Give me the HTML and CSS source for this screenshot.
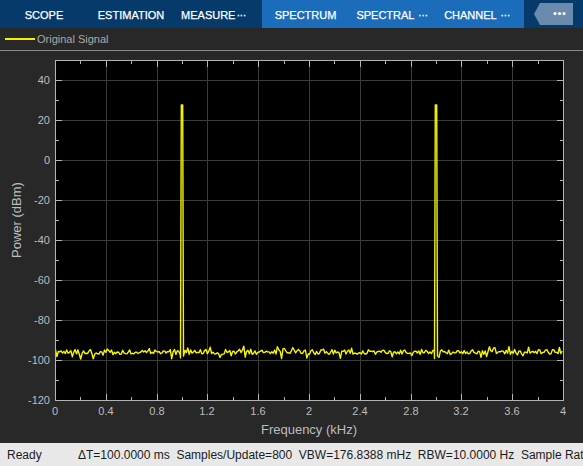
FILE: index.html
```html
<!DOCTYPE html>
<html lang="en">
<head>
<meta charset="utf-8">
<title>Spectrum Analyzer</title>
<link rel="stylesheet" href="styles.css">
</head>
<body>
<div class="app">
  <nav class="toolbar">
    <div class="group group-dark">
      <div class="tab"><span>SCOPE</span></div>
      <div class="tab"><span>ESTIMATION</span></div>
      <div class="tab"><span>MEASURE<span class="ell">···</span></span></div>
    </div>
    <div class="group group-light">
      <div class="tab"><span>SPECTRUM</span></div>
      <div class="tab"><span>SPECTRAL <span class="ell">···</span></span></div>
      <div class="tab"><span>CHANNEL <span class="ell">···</span></span></div>
    </div>
    <div class="group-end">
      <div class="more">
        <svg width="39" height="22" viewBox="0 0 39 22"><circle cx="21" cy="10.5" r="1.6" fill="#fff"/><circle cx="25.5" cy="10.5" r="1.6" fill="#fff"/><circle cx="30" cy="10.5" r="1.6" fill="#fff"/></svg>
      </div>
    </div>
  </nav>

  <div class="legend">
    <span class="swatch"></span>
    <span class="legend-label">Original Signal</span>
  </div>

  <div class="plot">
    <svg class="chart" width="583" height="392" viewBox="0 51 583 392">
      <rect x="55" y="60" width="509" height="341" fill="#000"/>
      <path class="grid" d="M106.5 61V400M157.5 61V400M207.5 61V400M258.5 61V400M309.5 61V400M360.5 61V400M411.5 61V400M461.5 61V400M512.5 61V400M56 80.5H563M56 120.5H563M56 160.5H563M56 200.5H563M56 240.5H563M56 280.5H563M56 320.5H563M56 360.5H563"/>
      <polyline id="trace" class="trace" points=""/>
      <path class="ticks" d="M56 80.5h6M56 120.5h6M56 160.5h6M56 200.5h6M56 240.5h6M56 280.5h6M56 320.5h6M56 360.5h6M56 100.5h3M56 140.5h3M56 180.5h3M56 220.5h3M56 260.5h3M56 300.5h3M56 340.5h3M56 380.5h3M563 80.5h-6M563 120.5h-6M563 160.5h-6M563 200.5h-6M563 240.5h-6M563 280.5h-6M563 320.5h-6M563 360.5h-6M563 100.5h-3M563 140.5h-3M563 180.5h-3M563 220.5h-3M563 260.5h-3M563 300.5h-3M563 340.5h-3M563 380.5h-3M106.5 400v-6M157.5 400v-6M207.5 400v-6M258.5 400v-6M309.5 400v-6M360.5 400v-6M411.5 400v-6M461.5 400v-6M512.5 400v-6M80.5 400v-3M131.5 400v-3M182.5 400v-3M233.5 400v-3M284.5 400v-3M334.5 400v-3M385.5 400v-3M436.5 400v-3M487.5 400v-3M538.5 400v-3M106.5 61v6M157.5 61v6M207.5 61v6M258.5 61v6M309.5 61v6M360.5 61v6M411.5 61v6M461.5 61v6M512.5 61v6M80.5 61v3M131.5 61v3M182.5 61v3M233.5 61v3M284.5 61v3M334.5 61v3M385.5 61v3M436.5 61v3M487.5 61v3M538.5 61v3"/>
      <rect class="frame" x="55.5" y="60.5" width="508" height="340"/>
      <g class="ylabels">
        <text x="50" y="84">40</text>
        <text x="50" y="124">20</text>
        <text x="50" y="164">0</text>
        <text x="50" y="204">-20</text>
        <text x="50" y="244">-40</text>
        <text x="50" y="284">-60</text>
        <text x="50" y="324">-80</text>
        <text x="50" y="364">-100</text>
        <text x="50" y="404">-120</text>
      </g>
      <g class="xlabels">
        <text x="55" y="415">0</text>
        <text x="106" y="415">0.4</text>
        <text x="157" y="415">0.8</text>
        <text x="207" y="415">1.2</text>
        <text x="258" y="415">1.6</text>
        <text x="309" y="415">2</text>
        <text x="360" y="415">2.4</text>
        <text x="411" y="415">2.8</text>
        <text x="461" y="415">3.2</text>
        <text x="512" y="415">3.6</text>
        <text x="563" y="415">4</text>
      </g>
      <text class="axis-title" x="309" y="434" text-anchor="middle">Frequency (kHz)</text>
      <text class="axis-title" x="21" y="220" text-anchor="middle" transform="rotate(-90 21 220)">Power (dBm)</text>
    </svg>
  </div>

  <footer class="status">
    <span class="ready">Ready</span>
    <span class="info">ΔT=100.0000 ms  Samples/Update=800  VBW=176.8388 mHz  RBW=10.0000 Hz  Sample Rate=8.0000 kHz</span>
  </footer>
</div>
<script src="script.js"></script>
</body>
</html>
```

FILE: styles.css
```css
* { box-sizing: border-box; }
html, body { margin: 0; padding: 0; }
body {
  width: 583px;
  height: 466px;
  overflow: hidden;
  background: #282828;
  font-family: "Liberation Sans", Arial, sans-serif;
}
.app {
  display: flex;
  flex-direction: column;
  height: 466px;
}
.toolbar {
  display: flex;
  height: 28px;
  flex: none;
  background: #063a6b;
}
.group {
  display: grid;
  height: 28px;
}
.group-dark {
  width: 262px;
  grid-template-columns: 88px 86px 79px;
}
.group-light {
  width: 262px;
  background: #1b6dbb;
  grid-template-columns: 87px 86px 84px;
}
.group-end {
  flex: 1;
  display: flex;
  align-items: flex-start;
}
.tab {
  color: #ffffff;
  font-size: 11px;
  display: flex;
  align-items: center;
  justify-content: center;
  white-space: pre;
  padding-top: 1px;
  -webkit-text-stroke: 0.25px #ffffff;
}
.ell {
  letter-spacing: -0.5px;
  margin-left: 1px;
}
.more {
  margin: 3px 0 0 10px;
  width: 39px;
  height: 22px;
  background: #6a8bad;
  clip-path: polygon(0 50%, 6px 0, 100% 0, 100% 100%, 6px 100%);
}
.more svg { display: block; }
.legend {
  height: 23px;
  flex: none;
  display: flex;
  align-items: center;
  border-bottom: 1px solid #8a8a8a;
}
.swatch {
  display: block;
  margin-left: 5px;
  width: 30px;
  height: 1.5px;
  background: #f2f200;
}
.legend-label {
  margin-left: 2px;
  font-size: 11px;
  color: #a9a9a9;
}
.plot {
  height: 392px;
  flex: none;
}
.chart { display: block; }
.grid {
  stroke: #3b3b3b;
  stroke-width: 1;
  fill: none;
  shape-rendering: crispEdges;
}
.ticks {
  stroke: #b4b4b4;
  stroke-width: 1;
  fill: none;
  shape-rendering: crispEdges;
}
.frame {
  fill: none;
  stroke: #b4b4b4;
  stroke-width: 1;
  shape-rendering: crispEdges;
}
.trace {
  fill: none;
  stroke: #f5f500;
  stroke-width: 1.4;
  stroke-linejoin: round;
}
.ylabels text {
  font-size: 11px;
  fill: #bdbdbd;
  text-anchor: end;
}
.xlabels text {
  font-size: 11px;
  fill: #bdbdbd;
  text-anchor: middle;
}
.axis-title {
  font-size: 13px;
  fill: #bdbdbd;
}
.status {
  height: 23px;
  flex: none;
  display: flex;
  align-items: center;
  background: #e8e8e8;
  color: #1c1c1c;
  font-size: 12px;
  white-space: pre;
  overflow: hidden;
}
.ready {
  width: 78px;
  flex: none;
  padding-left: 7px;
}
.info {
  flex: none;
}
```

FILE: script.js
```js
(function () {
  var trace = document.getElementById('trace');
  var seed = 11;
  function rnd() {
    seed = (seed * 16807) % 2147483647;
    return seed / 2147483647;
  }
  var pts = [];
  function add(x, y) { pts.push(x.toFixed(1) + ',' + y.toFixed(1)); }
  var peaks = [182, 436];
  var p = 0;
  var x = 55.5;
  while (x <= 563) {
    if (p < peaks.length && x >= peaks[p] - 1.5) {
      add(peaks[p] - 1.5, 357 + rnd() * 2);
      add(peaks[p] - 0.7, 105);
      add(peaks[p] + 0.7, 105);
      add(peaks[p] + 1.5, 356);
      x = peaks[p] + 3;
      p++;
      continue;
    }
    var y = 352 + (rnd() - 0.5) * 5;
    var r = rnd();
    if (r < 0.06) y += 2.5 + rnd() * 3.5;
    else if (r < 0.13) y -= 2 + rnd() * 2.5;
    add(x, y);
    x += 1.4;
  }
  trace.setAttribute('points', pts.join(' '));
})();
```
